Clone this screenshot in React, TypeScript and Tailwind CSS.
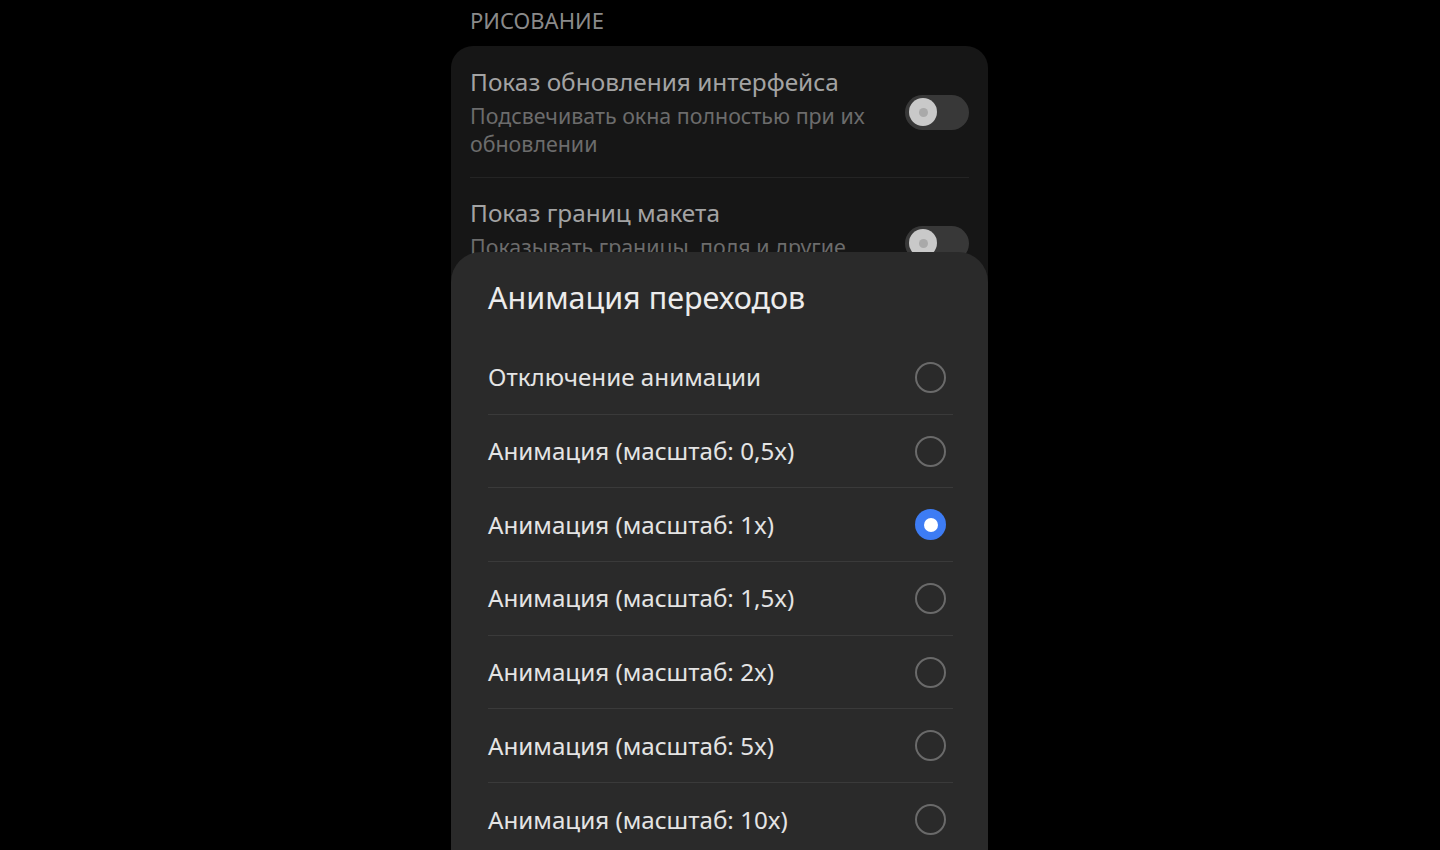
import React from 'react';

const options = [
  'Отключение анимации',
  'Анимация (масштаб: 0,5x)',
  'Анимация (масштаб: 1x)',
  'Анимация (масштаб: 1,5x)',
  'Анимация (масштаб: 2x)',
  'Анимация (масштаб: 5x)',
  'Анимация (масштаб: 10x)',
];

const Toggle: React.FC = () => (
  <div className="w-[64px] h-[35px] rounded-full bg-[#383838] flex items-center pl-[4px] shrink-0">
    <div className="w-[28px] h-[28px] rounded-full bg-[#c9c9c9] flex items-center justify-center">
      <div className="w-[9px] h-[9px] rounded-full bg-[#a9a9a9]" />
    </div>
  </div>
);

const Radio: React.FC<{ checked?: boolean }> = ({ checked }) =>
  checked ? (
    <div className="w-[31px] h-[31px] rounded-full bg-[#3d7cf4] flex items-center justify-center">
      <div className="w-[14px] h-[14px] rounded-full bg-white" />
    </div>
  ) : (
    <div className="w-[31px] h-[31px] rounded-full border-2 border-[#6a6a6a]" />
  );

const App: React.FC = () => {
  return (
    <div
      className="w-full h-[850px] bg-black flex justify-center overflow-hidden"
      style={{ fontFamily: '"Noto Sans", "Open Sans", sans-serif' }}
    >
      <div className="relative w-[537px] ml-[-1px]">
        {/* Section header */}
        <div className="pl-[19px] pt-[6px] h-[46px] text-[22px] leading-[28px] text-[#8a8a8a]">
          РИСОВАНИЕ
        </div>

        {/* Settings card */}
        <div className="bg-[#161616] rounded-[22px] px-[19px]">
          <div className="flex items-center gap-6 pt-[20px] pb-[19px] border-b border-[#242424]">
            <div className="flex-1">
              <div className="text-[24.4px] leading-[32px] text-[#a3a3a3]">Показ обновления интерфейса</div>
              <div className="mt-[4px] text-[21.4px] leading-[28px] text-[#6c6c6c]">
                Подсвечивать окна полностью при их обновлении
              </div>
            </div>
            <Toggle />
          </div>
          <div className="flex items-center gap-6 pt-[19px] pb-[19px]">
            <div className="flex-1">
              <div className="text-[24.4px] leading-[32px] text-[#a3a3a3]">Показ границ макета</div>
              <div className="mt-[4px] text-[21.4px] leading-[28px] text-[#6c6c6c]">
                Показывать границы, поля и другие элементы
              </div>
            </div>
            <Toggle />
          </div>
        </div>

        {/* Bottom sheet dialog */}
        <div className="absolute left-0 right-0 top-[252px] bg-[#2a2a2a] rounded-t-[30px] pl-[37px] pr-[35px] pt-[26px] pb-[40px]">
          <div className="text-[30.5px] leading-[38px] text-[#ececec] mb-[25px]">Анимация переходов</div>
          {options.map((label, i) => (
            <div
              key={label}
              className={`h-[73.7px] flex items-center justify-between pr-[7px] ${
                i < options.length - 1 ? 'border-b border-[#3a3a3a]' : ''
              }`}
            >
              <span className="text-[24.2px] text-[#e4e4e4]">{label}</span>
              <Radio checked={i === 2} />
            </div>
          ))}
        </div>
      </div>
    </div>
  );
};

export default App;
